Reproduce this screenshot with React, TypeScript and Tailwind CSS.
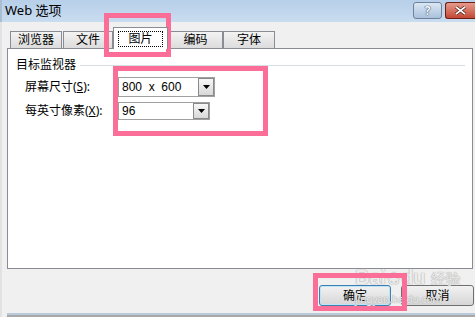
const font = { fontFamily: '"Noto Sans", "Noto Sans CJK SC", sans-serif' };

const Tab = ({ label, width, active }: { label: string; width: string; active?: boolean }) =>
  active ? (
    <div
      className={`relative z-10 -mb-[1px] flex h-[22px] ${width} items-center justify-center border border-b-0 border-[#898c95] bg-white`}
    >
      <span className="border border-dotted border-black px-[9px] text-[12px] leading-[14px]">{label}</span>
    </div>
  ) : (
    <div
      className={`flex h-[17px] ${width} items-center justify-center border border-b-0 border-[#898c95] bg-gradient-to-b from-[#f3f3f3] to-[#dcdcdc] text-[12px]`}
    >
      {label}
    </div>
  );

const Select = ({ value, width, height }: { value: string; width: string; height: string }) => (
  <div className={`flex ${width} ${height} items-stretch border border-[#a0a0a0] bg-white`}>
    <span
      className="flex flex-1 items-center whitespace-pre pl-[3px] text-[12px]"
      style={{ fontFamily: '"Liberation Sans", sans-serif' }}
    >
      {value}
    </span>
    <div className="flex w-[16px] items-center justify-center border border-[#8a8a8a] bg-gradient-to-b from-[#f7f7f7] to-[#d8d8d8]">
      <svg width="7" height="4" viewBox="0 0 7 4">
        <path d="M0 0h7L3.5 4z" fill="#000" />
      </svg>
    </div>
  </div>
);

export default function App() {
  return (
    <div className="relative h-[317px] w-[475px] overflow-hidden bg-[#f0f0f0] text-black" style={font}>
      {/* title bar */}
      <div className="flex h-[22px] items-start justify-between border-l-2 border-[#a9bdd3] bg-gradient-to-b from-[#b7cfe9] to-[#c9dcf0]">
        <span className="pl-[3px] pt-[2px] text-[13px] leading-[17px]">Web 选项</span>
        <div className="flex gap-[3px] pt-[2px]">
          <div
            className="flex h-[17px] w-[29px] items-center justify-center rounded-[3px] border border-[#6f829a] bg-gradient-to-b from-[#dbe7f4] to-[#aac1dc] text-[12px] font-bold leading-none text-[#f4f8fc]"
            style={{ textShadow: "0 0 1px #2b3e56, 0 0 1px #2b3e56" }}
          >
            ?
          </div>
          <div className="flex h-[17px] w-[30px] items-center justify-center rounded-l-[3px] border border-r-0 border-[#6d1f17] bg-gradient-to-b from-[#e59a8c] to-[#c34732]">
            <svg width="11" height="9" viewBox="0 0 11 9">
              <path d="M1 1l9 7M10 1L1 8" stroke="#3d1410" strokeWidth="3" />
              <path d="M1 1l9 7M10 1L1 8" stroke="#fff" strokeWidth="1.6" />
            </svg>
          </div>
        </div>
      </div>

      <div className="flex h-[295px] flex-col border-l-2 border-[#e2e2e2] pl-[5px]">
        {/* tabs */}
        <div className="flex h-[26px] items-end pl-[3px]">
          <Tab label="浏览器" width="w-[52px]" />
          <div className="w-[1px]" />
          <Tab label="文件" width="w-[50px]" />
          <Tab label="图片" width="w-[55px]" active />
          <Tab label="编码" width="w-[55px]" />
          <Tab label="字体" width="w-[52px]" />
        </div>

        {/* panel */}
        <div className="h-[221px] w-[466px] border border-[#898c95] bg-white px-[8px] pt-[7px]">
          <div className="flex items-center gap-[4px] text-[12px]">
            <span>目标监视器</span>
            <div className="mr-[-1px] h-[1px] flex-1 bg-[#d5dfe5]" />
          </div>
          <div className="mt-[3px] flex flex-col gap-[5px] pl-[9px] text-[12px]">
            <div className="flex items-center">
              <span className="w-[93px]">
                屏幕尺寸(<u>S</u>):
              </span>
              <Select value="800  x  600" width="w-[97px]" height="h-[20px]" />
            </div>
            <div className="flex items-center">
              <span className="w-[93px]">
                每英寸像素(<u>X</u>):
              </span>
              <Select value="96" width="w-[92px]" height="h-[18px]" />
            </div>
          </div>
        </div>

        {/* buttons */}
        <div className="mt-[16px] flex justify-end gap-[10px] pr-[1px]">
          <button className="h-[21px] w-[72px] rounded-[3px] border border-[#3c7fb1] bg-gradient-to-b from-[#f2f2f2] to-[#d6d6d6] text-[12px] shadow-[inset_0_0_0_1px_#bfe4f8]">
            确定
          </button>
          <button className="h-[21px] w-[73px] rounded-[3px] border border-[#707070] bg-gradient-to-b from-[#f2f2f2] to-[#d6d6d6] text-[12px]">
            取消
          </button>
        </div>
        <div className="mt-auto h-[4px] border-t-2 border-[#b9cadb] bg-[#a8a8a8]" />
      </div>

      {/* watermark */}
      <div
        className="pointer-events-none absolute left-[355px] top-[266px] flex flex-col items-start text-white/80"
        style={{ textShadow: "0 0 1px #a0a0a0, 0 0 1px #a0a0a0" }}
      >
        <span className="text-[20px] font-bold leading-[22px]" style={{ fontFamily: '"Liberation Sans", sans-serif' }}>
          Bai<span className="mx-[1px] text-[16px]">❀</span>du <span className="text-[15px] font-normal">经验</span>
        </span>
        <span className="mt-[4px] text-[10px] leading-[11px]">jingyan.baidu.com</span>
      </div>

      {/* highlight boxes */}
      <div className="pointer-events-none absolute left-[104px] top-[13px] h-[44px] w-[67px] border-[5px] border-[#fa6e98]" />
      <div className="pointer-events-none absolute left-[113px] top-[66px] h-[70px] w-[155px] border-[5px] border-[#fa6e98]" />
      <div className="pointer-events-none absolute left-[313px] top-[273px] h-[38px] w-[94px] border-[5px] border-[#fa6e98]" />
    </div>
  );
}
